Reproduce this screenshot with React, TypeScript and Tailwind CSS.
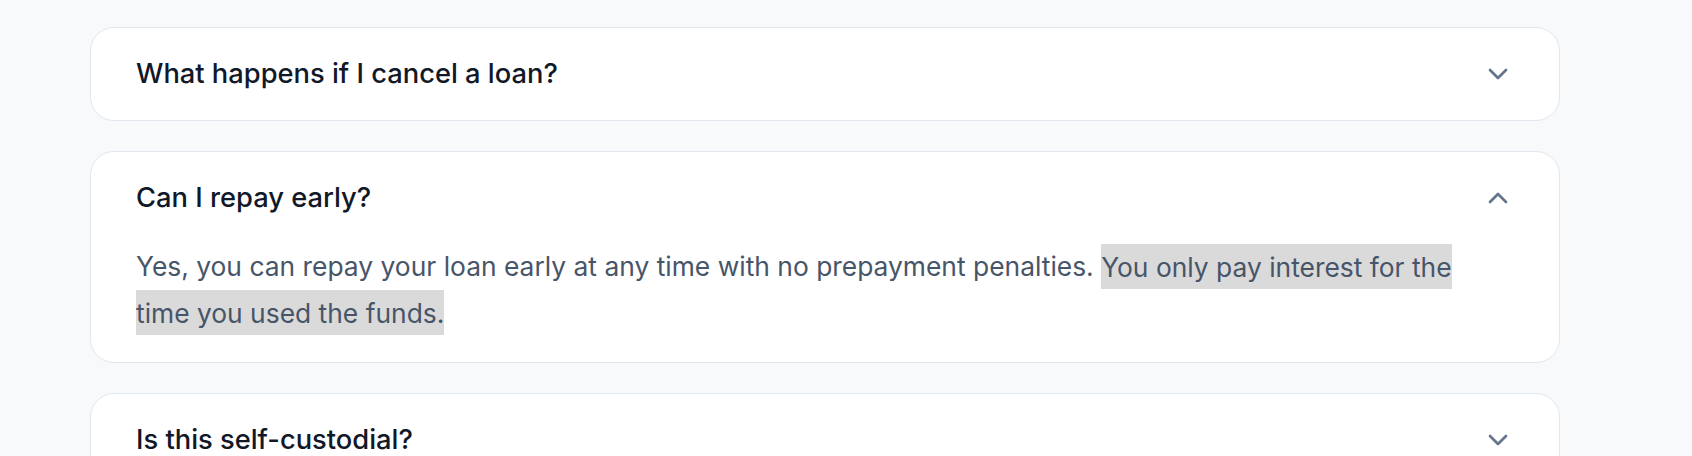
import { ChevronDown, ChevronUp } from 'lucide-react';

interface FaqItem {
  question: string;
  open?: boolean;
}

const items: FaqItem[] = [
  { question: 'What happens if I cancel a loan?' },
  { question: 'Can I repay early?', open: true },
  { question: 'Is this self-custodial?' },
];

function FaqCard({ question, open }: FaqItem) {
  return (
    <div className="rounded-[24px] border border-[#e2e8f0] bg-white px-[45px] py-[25px]">
      <div className="flex items-center justify-between">
        <h3 className="text-[27.3px] leading-[42px] font-medium text-[#111827]">
          {question}
        </h3>
        {open ? (
          <ChevronUp className="h-[32px] w-[32px] text-[#64748b]" strokeWidth={2} />
        ) : (
          <ChevronDown className="h-[32px] w-[32px] text-[#64748b]" strokeWidth={2} />
        )}
      </div>
      {/* answer keeps clear of the chevron column */}
      {open && (
        <p className="mt-[24px] mb-[2px] pr-[48px] text-[26.4px] leading-[46px] text-[#475569]">
          Yes, you can repay your loan early at any time with no prepayment penalties.{' '}
          <span className="bg-[#dadada] py-[6.5px]">
            You only pay interest for the time you used the funds.
          </span>
        </p>
      )}
    </div>
  );
}

export default function App() {
  return (
    <div
      className="min-h-screen bg-[#f8f9fb] pt-[27px] pl-[90px]"
      style={{ fontFamily: 'Inter, "Noto Sans", sans-serif' }}
    >
      <div className="flex w-[1470px] flex-col gap-[30px]">
        {items.map((item) => (
          <FaqCard key={item.question} {...item} />
        ))}
      </div>
    </div>
  );
}
